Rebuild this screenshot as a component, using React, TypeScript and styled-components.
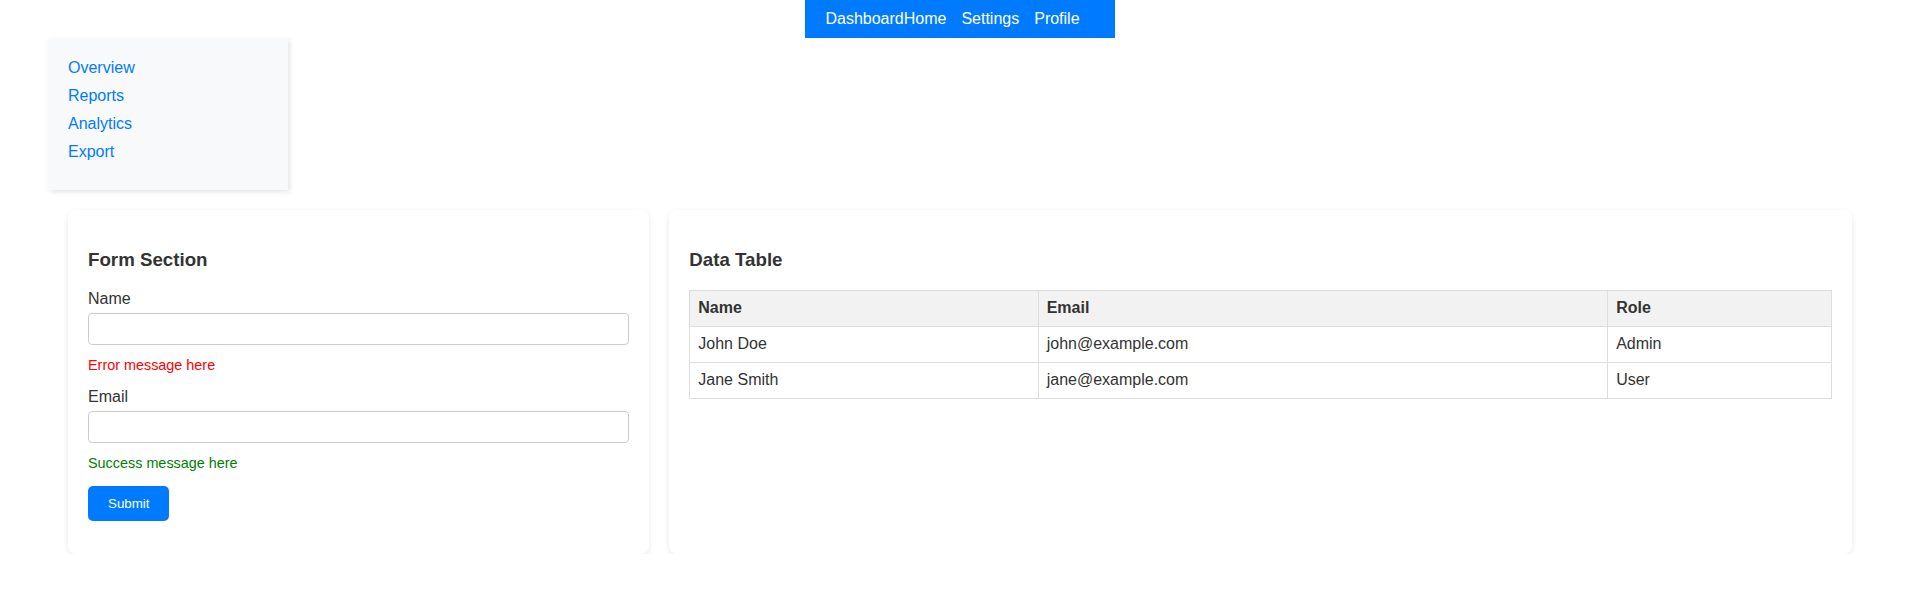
import React from "react";
import styled, { createGlobalStyle } from "styled-components";

const GlobalStyle = createGlobalStyle`
  html, body {
    margin: 0;
    padding: 0;
    background: #ffffff;
  }
  body {
    font-family: "Liberation Sans", Arial, sans-serif;
    font-size: 16px;
    color: #333333;
  }
`;

const Page = styled.div`
  display: flex;
  flex-direction: column;
`;

const TopBar = styled.div`
  display: flex;
  justify-content: center;
  padding-left: 14px;
`;

const Header = styled.header`
  display: flex;
  align-items: center;
  background: #007bff;
  color: #ffffff;
  padding: 10px 20px;
  font-size: 16px;
`;

const Brand = styled.span`
  color: #ffffff;
`;

const Nav = styled.nav`
  display: flex;
`;

const NavLink = styled.a`
  color: #ffffff;
  text-decoration: none;
  margin-right: 15px;
`;

const Sidebar = styled.aside`
  width: 200px;
  padding: 21px 20px 19px;
  margin-left: 48px;
  background: #f8f9fa;
  box-shadow: 2px 2px 5px rgba(0, 0, 0, 0.1);
`;

const SideList = styled.ul`
  list-style: none;
  margin: 0;
  padding: 0;
`;

const SideItem = styled.li`
  margin-bottom: 10px;
`;

const SideLink = styled.a`
  color: #007bff;
  text-decoration: none;
  font-size: 16px;
`;

const Main = styled.main`
  display: grid;
  grid-template-columns: minmax(0, 29fr) minmax(0, 59fr);
  gap: 20px;
  padding: 20px 54px 0 68px;
  align-items: stretch;
`;

const Card = styled.section`
  background: #ffffff;
  border-radius: 8px;
  padding: 20px;
  box-shadow: 0 2px 6px rgba(0, 0, 0, 0.09);
`;

const CardTitle = styled.h3`
  font-size: 1.17em;
  font-weight: bold;
  margin: 18.72px 0 19.7px;
  color: #333333;
`;

const Field = styled.div`
  margin-bottom: 15px;
`;

const Label = styled.label`
  display: block;
  margin-bottom: 5px;
  color: #333333;
`;

const TextInput = styled.input`
  display: block;
  width: 100%;
  box-sizing: border-box;
  padding: 7px 8px;
  font-family: "Liberation Sans", Arial, sans-serif;
  font-size: 14px;
  border: 1px solid #cccccc;
  border-radius: 4px;
  background: #ffffff;
`;

const Message = styled.p<{ $tone: "error" | "success" }>`
  margin: 12px 0 0;
  font-size: 0.9em;
  color: ${(p) => (p.$tone === "error" ? "#ff0000" : "#008000")};
`;

const SubmitButton = styled.button`
  display: block;
  background: #007bff;
  color: #ffffff;
  border: none;
  border-radius: 5px;
  padding: 10px 20px;
  font-family: "Liberation Sans", Arial, sans-serif;
  font-size: 13.333px;
  margin: 2.5px 0 13px;
  cursor: pointer;
`;

const Table = styled.table`
  width: 100%;
  border-collapse: collapse;
  margin-top: 2px;
`;

const HeadCell = styled.th`
  border: 1px solid #dddddd;
  padding: 8px;
  line-height: 18.7px;
  text-align: left;
  background: #f2f2f2;
  font-weight: bold;
  color: #333333;
`;

const Cell = styled.td`
  border: 1px solid #dddddd;
  padding: 8px;
  line-height: 18.7px;
  text-align: left;
  color: #333333;
`;

const rows = [
  { name: "John Doe", email: "john@example.com", role: "Admin" },
  { name: "Jane Smith", email: "jane@example.com", role: "User" },
];

export default function App() {
  return (
    <Page>
      <GlobalStyle />
      <TopBar>
        <Header>
          <Brand>Dashboard</Brand>
          <Nav>
            <NavLink href="#">Home</NavLink>
            <NavLink href="#">Settings</NavLink>
            <NavLink href="#">Profile</NavLink>
          </Nav>
        </Header>
      </TopBar>
      <div>
        <Sidebar>
          <SideList>
            {["Overview", "Reports", "Analytics", "Export"].map((t) => (
              <SideItem key={t}>
                <SideLink href="#">{t}</SideLink>
              </SideItem>
            ))}
          </SideList>
        </Sidebar>
      </div>
      <Main>
        <Card>
          <CardTitle>Form Section</CardTitle>
          <form onSubmit={(e) => e.preventDefault()}>
            <Field>
              <Label htmlFor="name">Name</Label>
              <TextInput id="name" type="text" />
              <Message $tone="error">Error message here</Message>
            </Field>
            <Field>
              <Label htmlFor="email">Email</Label>
              <TextInput id="email" type="email" />
              <Message $tone="success">Success message here</Message>
            </Field>
            <SubmitButton type="submit">Submit</SubmitButton>
          </form>
        </Card>
        <Card>
          <CardTitle>Data Table</CardTitle>
          <Table>
            <thead>
              <tr>
                <HeadCell>Name</HeadCell>
                <HeadCell>Email</HeadCell>
                <HeadCell>Role</HeadCell>
              </tr>
            </thead>
            <tbody>
              {rows.map((r) => (
                <tr key={r.email}>
                  <Cell>{r.name}</Cell>
                  <Cell>{r.email}</Cell>
                  <Cell>{r.role}</Cell>
                </tr>
              ))}
            </tbody>
          </Table>
        </Card>
      </Main>
    </Page>
  );
}
